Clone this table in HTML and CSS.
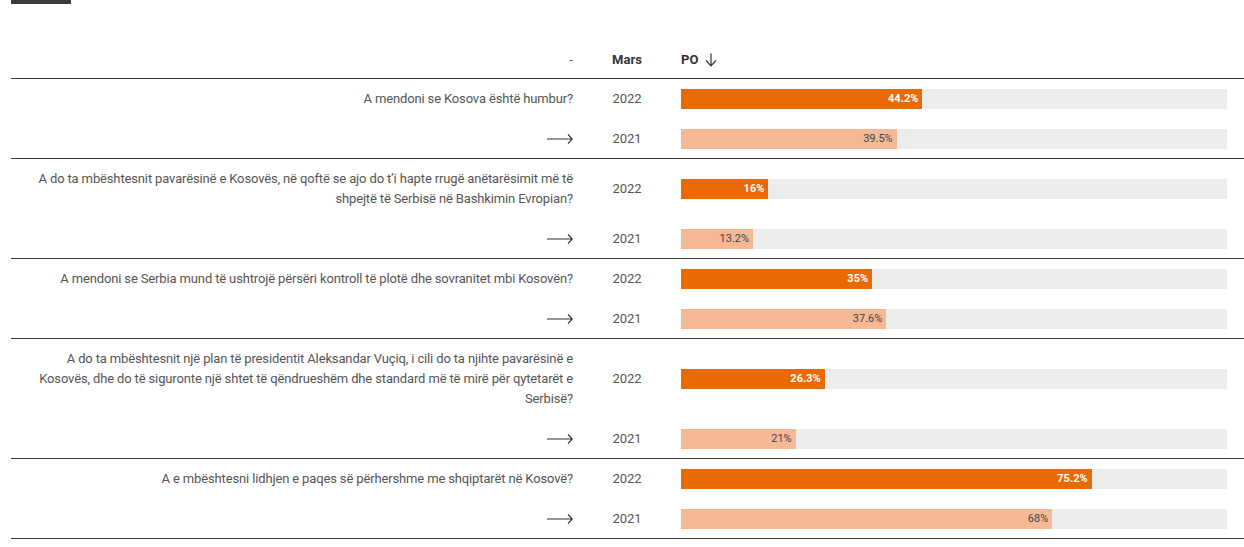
FILE: index.html
```html
<!DOCTYPE html>
<html lang="sq">
<head>
<meta charset="utf-8">
<title>Sondazh</title>
<link rel="stylesheet" href="styles.css">
</head>
<body>
<div class="page">
  <div class="tab"></div>
  <div class="table">
    <div class="row head">
      <div class="c-label">-</div>
      <div class="c-year">Mars</div>
      <div class="c-bar">PO <svg class="sort" width="12" height="14" viewBox="0 0 12 14"><path d="M6 0.5V13M1 7.5L6 12.8L11 7.5" fill="none" stroke="#333" stroke-width="1.2"/></svg></div>
    </div>

    <div class="group">
      <div class="row">
        <div class="c-label">A mendoni se Kosova është humbur?</div>
        <div class="c-year">2022</div>
        <div class="c-bar"><div class="track"><div class="fill cur" style="width:44.2%"><span>44.2%</span></div></div></div>
      </div>
      <div class="row">
        <div class="c-label"><svg class="arr" width="26" height="12" viewBox="0 0 26 12"><path d="M0 6H25M21 1.5L25.2 6L21 10.5" fill="none" stroke="#333" stroke-width="1.1"/></svg></div>
        <div class="c-year">2021</div>
        <div class="c-bar"><div class="track"><div class="fill prev" style="width:39.5%"><span>39.5%</span></div></div></div>
      </div>
    </div>

    <div class="group">
      <div class="row">
        <div class="c-label">A do ta mbështesnit pavarësinë e Kosovës, në qoftë se ajo do t’i hapte rrugë anëtarësimit më të shpejtë të Serbisë në Bashkimin Evropian?</div>
        <div class="c-year">2022</div>
        <div class="c-bar"><div class="track"><div class="fill cur" style="width:16%"><span>16%</span></div></div></div>
      </div>
      <div class="row">
        <div class="c-label"><svg class="arr" width="26" height="12" viewBox="0 0 26 12"><path d="M0 6H25M21 1.5L25.2 6L21 10.5" fill="none" stroke="#333" stroke-width="1.1"/></svg></div>
        <div class="c-year">2021</div>
        <div class="c-bar"><div class="track"><div class="fill prev" style="width:13.2%"><span>13.2%</span></div></div></div>
      </div>
    </div>

    <div class="group">
      <div class="row">
        <div class="c-label">A mendoni se Serbia mund të ushtrojë përsëri kontroll të plotë dhe sovranitet mbi Kosovën?</div>
        <div class="c-year">2022</div>
        <div class="c-bar"><div class="track"><div class="fill cur" style="width:35%"><span>35%</span></div></div></div>
      </div>
      <div class="row">
        <div class="c-label"><svg class="arr" width="26" height="12" viewBox="0 0 26 12"><path d="M0 6H25M21 1.5L25.2 6L21 10.5" fill="none" stroke="#333" stroke-width="1.1"/></svg></div>
        <div class="c-year">2021</div>
        <div class="c-bar"><div class="track"><div class="fill prev" style="width:37.6%"><span>37.6%</span></div></div></div>
      </div>
    </div>

    <div class="group">
      <div class="row">
        <div class="c-label">A do ta mbështesnit një plan të presidentit Aleksandar Vuçiq, i cili do ta njihte pavarësinë e Kosovës, dhe do të siguronte një shtet të qëndrueshëm dhe standard më të mirë për qytetarët e Serbisë?</div>
        <div class="c-year">2022</div>
        <div class="c-bar"><div class="track"><div class="fill cur" style="width:26.3%"><span>26.3%</span></div></div></div>
      </div>
      <div class="row">
        <div class="c-label"><svg class="arr" width="26" height="12" viewBox="0 0 26 12"><path d="M0 6H25M21 1.5L25.2 6L21 10.5" fill="none" stroke="#333" stroke-width="1.1"/></svg></div>
        <div class="c-year">2021</div>
        <div class="c-bar"><div class="track"><div class="fill prev" style="width:21%"><span>21%</span></div></div></div>
      </div>
    </div>

    <div class="group">
      <div class="row">
        <div class="c-label">A e mbështesni lidhjen e paqes së përhershme me shqiptarët në Kosovë?</div>
        <div class="c-year">2022</div>
        <div class="c-bar"><div class="track"><div class="fill cur" style="width:75.2%"><span>75.2%</span></div></div></div>
      </div>
      <div class="row">
        <div class="c-label"><svg class="arr" width="26" height="12" viewBox="0 0 26 12"><path d="M0 6H25M21 1.5L25.2 6L21 10.5" fill="none" stroke="#333" stroke-width="1.1"/></svg></div>
        <div class="c-year">2021</div>
        <div class="c-bar"><div class="track"><div class="fill prev" style="width:68%"><span>68%</span></div></div></div>
      </div>
    </div>
  </div>
</div>
</body>
</html>
```
FILE: styles.css
```css
html, body {
  margin: 0;
  padding: 0;
  background: #fff;
}
body {
  font-family: Roboto, "Noto Sans", sans-serif;
  font-size: 13px;
  line-height: 20px;
  color: #555;
}
.page {
  padding-left: 11px;
}
.tab {
  width: 60px;
  height: 4px;
  background: #3b3b3b;
}
.table {
  margin-top: 37px;
}
.row {
  display: grid;
  grid-template-columns: 578px 76px 1fr;
  align-items: center;
  min-height: 40px;
  box-sizing: border-box;
  padding: 10px 0;
}
.group .row:last-child {
  min-height: 39px;
  padding-bottom: 9px;
}
.head {
  min-height: 38px;
  padding: 0;
  border-bottom: 1px solid #333;
  font-weight: 700;
  color: #333;
}
.head .c-label {
  font-weight: 400;
  color: #555;
}
.group {
  border-bottom: 1px solid #333;
}
.c-label {
  text-align: right;
  letter-spacing: -0.14px;
  padding: 0 16px 0 6px;
  display: flex;
  justify-content: flex-end;
  align-items: center;
}
.c-year {
  text-align: center;
}
.c-bar {
  padding: 0 17px 0 16px;
  display: flex;
  align-items: center;
}
.sort {
  margin-left: 7px;
}
.arr {
  display: block;
}
.track {
  flex: 1;
  height: 20px;
  background: #ececec;
}
.fill {
  height: 20px;
  display: flex;
  justify-content: flex-end;
  align-items: center;
  box-sizing: border-box;
  padding-right: 4px;
  font-size: 11px;
  line-height: 20px;
}
.fill.cur {
  background: #e96903;
  color: #fff;
  font-weight: 700;
}
.fill.prev {
  background: #f5b996;
  color: #444;
}
```
